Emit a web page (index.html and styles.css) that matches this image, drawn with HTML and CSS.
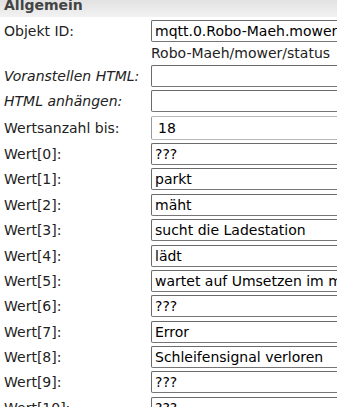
FILE: index.html
```html
<!DOCTYPE html>
<html lang="de">
<head>
    <meta charset="UTF-8">
    <meta name="viewport" content="width=device-width, initial-scale=1.0">
    <title>Allgemein</title>
    <link rel="stylesheet" href="styles.css">
</head>
<body>
    <div class="panel">
        <div class="section-head">Allgemein</div>

        <div class="form">
            <label class="label">Objekt ID:</label>
            <input class="field" type="text" value="mqtt.0.Robo-Maeh.mower.status">

            <div class="label"></div>
            <div class="hint">Robo-Maeh/mower/status</div>

            <label class="label italic">Voranstellen HTML:</label>
            <input class="field" type="text" value="">

            <label class="label italic">HTML anhängen:</label>
            <input class="field" type="text" value="">

            <label class="label">Wertsanzahl bis:</label>
            <input class="field number" type="text" value="18">

            <label class="label">Wert[0]:</label>
            <input class="field" type="text" value="???">
            <label class="label">Wert[1]:</label>
            <input class="field" type="text" value="parkt">
            <label class="label">Wert[2]:</label>
            <input class="field" type="text" value="mäht">
            <label class="label">Wert[3]:</label>
            <input class="field" type="text" value="sucht die Ladestation">
            <label class="label">Wert[4]:</label>
            <input class="field" type="text" value="lädt">
            <label class="label">Wert[5]:</label>
            <input class="field" type="text" value="wartet auf Umsetzen im manuellen Modus">
            <label class="label">Wert[6]:</label>
            <input class="field" type="text" value="???">
            <label class="label">Wert[7]:</label>
            <input class="field" type="text" value="Error">
            <label class="label">Wert[8]:</label>
            <input class="field" type="text" value="Schleifensignal verloren">
            <label class="label">Wert[9]:</label>
            <input class="field" type="text" value="???">
            <label class="label">Wert[10]:</label>
            <input class="field" type="text" value="???">
        </div>
    </div>
</body>
</html>
```

FILE: styles.css
```css
* {
    margin: 0;
    padding: 0;
    box-sizing: border-box;
}

html, body {
    overflow: hidden;
}

body {
    background: #fff;
    color: #222;
    font-family: "DejaVu Sans", Verdana, sans-serif;
    font-size: 14px;
}

.panel {
    width: 420px;
}

.section-head {
    margin-top: -6px;
    height: 23px;
    line-height: 23px;
    padding: 0 4px;
    font-weight: bold;
    color: #444;
    background: linear-gradient(#dcdcdc, #f2f2f2);
}

.form {
    display: grid;
    grid-template-columns: 151px 260px;
    align-items: center;
    row-gap: 3.4px;
    padding-top: 3px;
}

.label {
    padding-left: 4px;
    white-space: nowrap;
}

.italic {
    font-style: italic;
}

.hint {
    height: 16px;
    line-height: 16px;
    white-space: nowrap;
}

.field {
    height: 22px;
    width: 100%;
    padding: 0 3px;
    font-family: inherit;
    font-size: 14px;
    color: #000;
    border: 1px solid #767676;
    border-top-color: #6a6a6a;
    border-left-color: #6a6a6a;
    border-radius: 2px;
    background: #fff;
}

.number {
    height: 24px;
    padding-left: 6px;
    border-color: #b8b8b8;
    border-left-color: #999;
}
```
